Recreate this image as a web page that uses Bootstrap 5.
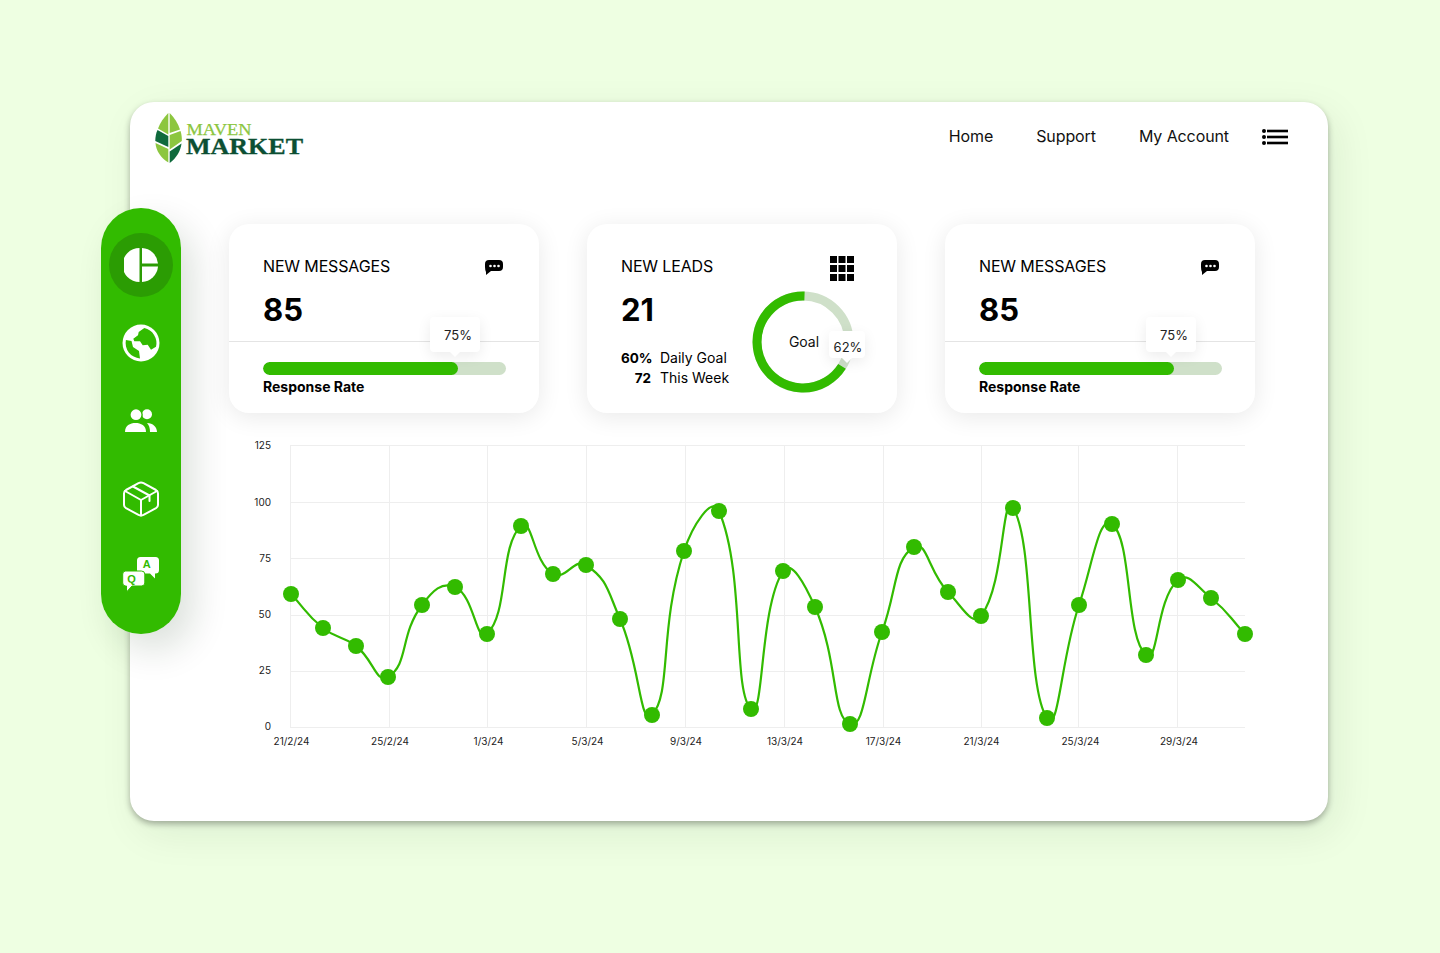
<!DOCTYPE html>
<html lang="en">
<head>
    <meta charset="UTF-8">
    <meta name="viewport" content="width=device-width, initial-scale=1.0">
    <title>Maven Market Dashboard</title>
    <link rel="stylesheet" href="https://cdn.jsdelivr.net/npm/bootstrap@5.3.0/dist/css/bootstrap.min.css">
    <style>
        html, body { height: 100%; }
        body { background: #eeffe2; font-family: Inter, "Liberation Sans", sans-serif; color: #000; padding: 102px 0 0 130px; }
        .dash-panel { width: 1198px; height: 719px; background: #fff; border-radius: 24px; box-shadow: 0 3px 6px rgba(0,0,0,.3), 8px 12px 40px rgba(0,40,0,.08); }
        .dash-head { height: 106px; padding: 10px 40px 0 25px; }
        .logo-svg { width: 150px; height: 53px; display: block; }
        .top-links { gap: 43px; margin-right: 33px; margin-top: 12px; }
        .top-links a { color: #111; font-size: 16px; line-height: 24px; letter-spacing: -.1px; text-decoration: none; }
        .menu-btn { margin-top: 17px; line-height: 0; }
        .side-rail { width: 80px; height: 426px; margin-left: -29px; padding: 25px 8px; gap: 14px; background: #32bb00; border-radius: 40px; box-shadow: 12px 16px 36px rgba(0,40,0,.14); flex: none; }
        .rail-item { width: 64px; height: 64px; border-radius: 50%; }
        .rail-item.is-on { background: #2b9c03; }
        .qa-icon { margin-bottom: 6px; }
        .main-col { width: 1026px; margin-left: 48px; padding-top: 16px; }
        .kpi-row { gap: 48px; }
        .kpi-card { width: 310px; height: 189px; background: #fff; border-radius: 20px; box-shadow: 0 4px 24px rgba(0,0,0,.09); position: relative; }
        .kpi-top { height: 118px; padding: 31px 36px 0 34px; border-bottom: 1px solid #e4e4e4; }
        .kpi-title { font-size: 16px; line-height: 22px; letter-spacing: -.15px; }
        .kpi-value { font-size: 31px; font-weight: 700; line-height: 36px; margin-top: 15px; }
        .kpi-bottom { padding: 20px 33px 0 34px; }
        .rate-bar { height: 13px; border-radius: 7px; background: #cfe0c9; }
        .rate-bar .progress-bar { background: #32bb00; border-radius: 7px; }
        .rate-label { font-size: 14px; font-weight: 700; line-height: 20px; margin-top: 2px; }
        .msg-icon { margin-top: 5px; }
        .grid-icon { margin-top: 1px; }
        .tip-box { position: absolute; background: #fff; border-radius: 4px; font-size: 13px; line-height: 20px; color: #222; text-align: center; box-shadow: 0 4px 14px rgba(0,0,0,.08); }
        .tip-box::after { content: ""; position: absolute; left: 50%; bottom: -5px; margin-left: -6px; border: 6px solid transparent; border-bottom: 0; border-top-color: #fff; }
        .tip-msg { left: 201px; top: 93px; width: 50px; height: 35px; padding: 8px 0 0 6px; }
        .tip-goal { left: 242px; top: 107px; width: 36px; height: 27px; padding: 6px 0 0 2px; }
        .lead-row { margin-top: 10px; }
        .lead-row .kpi-value { margin-top: 1px; }
        .lead-stats { margin-top: 20px; font-size: 14px; line-height: 19px; }
        .lead-stats b { display: inline-block; width: 30px; font-size: 13.5px; text-align: right; margin-right: 9px; }
        .kpi-lead { padding: 31px 43px 0 34px; }
        .donut-svg { width: 102px; height: 102px; display: block; }
        .chart-svg { width: 1026px; height: 320px; display: block; margin-top: 22px; overflow: visible; }
        .chart-svg text { font-family: Inter, "Liberation Sans", sans-serif; font-size: 10px; fill: #222; }
    </style>
</head>
<body>

<div class="dash-panel">
    <!-- top bar -->
    <div class="dash-head d-flex justify-content-between align-items-start">
        <svg class="logo-svg" viewBox="155 112 150 53">
            <path d="M168.300 113C163.500 118 160 123 158 128.500L168.300 134.500Z" fill="#8cc63f"/>
            <path d="M169.700 113C174.500 118 178 123 180 129.500L169.700 133Z" fill="#8cc63f"/>
            <path d="M157.500 130C156 133 155.300 137 155.300 141L168.300 147V136Z" fill="#0f6a3c"/>
            <path d="M180.500 131C181.500 134 182 137 181.800 141L169.700 149.500V135Z" fill="#8cc63f"/>
            <path d="M155.500 143C156 151 161 158 168.300 162.500V149Z" fill="#8cc63f"/>
            <path d="M181.500 143.500C180.500 151 176.500 158 169.700 163V151.500Z" fill="#0f6a3c"/>
            <text x="186.500" y="134.500" font-family="Liberation Serif, serif" font-size="17.500" fill="#8cc63f" stroke="#8cc63f" stroke-width=".25" textLength="65" lengthAdjust="spacingAndGlyphs">MAVEN</text>
            <text x="186" y="153.500" font-family="Liberation Serif, serif" font-weight="700" font-size="22.500" fill="#0c4f33" stroke="#0c4f33" stroke-width=".3" textLength="117" lengthAdjust="spacingAndGlyphs">MARKET</text>
        </svg>
        <div class="d-flex">
            <nav class="top-links d-flex">
                <a href="#">Home</a>
                <a href="#">Support</a>
                <a href="#">My Account</a>
            </nav>
            <div class="menu-btn">
                <svg width="26" height="16" viewBox="0 0 26 16"><g fill="#000"><circle cx="2" cy="2" r="2"/><circle cx="2" cy="8" r="2"/><circle cx="2" cy="14" r="2"/><rect x="5" y=".7" width="21" height="2.600"/><rect x="5" y="6.700" width="21" height="2.600"/><rect x="5" y="12.700" width="21" height="2.600"/></g></svg>
            </div>
        </div>
    </div>

    <div class="d-flex align-items-start">
        <!-- side rail -->
        <div class="side-rail d-flex flex-column">
            <div class="rail-item is-on d-flex align-items-center justify-content-center">
                <svg width="34" height="34" viewBox="0 0 34 34" fill="#fff"><path d="M15.500 0A17 17 0 0 0 15.500 34Z"/><path d="M18 0A17 17 0 0 1 34 15.500H18Z"/><path d="M18 18.500H34A17 17 0 0 1 18 34Z"/></svg>
            </div>
            <div class="rail-item d-flex align-items-center justify-content-center">
                <svg width="38" height="38" viewBox="0 0 38 38"><circle cx="19" cy="19" r="18.500" fill="#fff"/><path d="M22.300 4.100L16.700 8L16 11.300L11.300 14.700L12.300 17.300L18 17.300L20.700 21.300L25.700 20.700L29 25.700L34 22.700A15.400 15.400 0 0 0 22.300 4.100Z" fill="#32bb00"/><path d="M3.900 16L9.500 17L11 23L17 27L18 34.400A15.400 15.400 0 0 1 3.900 16Z" fill="#32bb00"/></svg>
            </div>
            <div class="rail-item d-flex align-items-center justify-content-center">
                <svg width="32" height="24" viewBox="0 0 32 24" fill="#fff"><circle cx="22" cy="5.200" r="5"/><circle cx="11" cy="5.700" r="6.800" fill="#32bb00"/><circle cx="11" cy="5.700" r="5.400"/><path d="M0 23C0 16.500 5 14 10.500 14S21 16.500 21 23Z"/><path d="M22 14C28 14 32 18 32 23H25C25 19 24 16 22 14Z"/></svg>
            </div>
            <div class="rail-item d-flex align-items-center justify-content-center">
                <svg width="36" height="36" viewBox="-1 -1 36 36" fill="none" stroke="#fff" stroke-width="2" stroke-linejoin="round" stroke-linecap="round"><path d="M14.500 1.200Q17 0 19.500 1.200L32 8Q34 9.200 34 11.500V23Q34 25 32 26.200L19.500 32.800Q17 34 14.500 32.800L2 26.200Q0 25 0 23V11.500Q0 9.200 2 8Z"/><path d="M1 9L17 18L33 9M17 18V33.500"/><path d="M9 4.500L25.500 13.500V19"/></svg>
            </div>
            <div class="rail-item d-flex align-items-center justify-content-center">
                <svg class="qa-icon" width="38" height="36" viewBox="0 0 38 36"><path d="M18.500 1H33.500Q37 1 37 4.500V14Q37 17.500 33.500 17.500H33V22.500L28 17.500H18.500Q15 17.500 15 14V4.500Q15 1 18.500 1Z" fill="#fff"/><path d="M3.700 15H19.300Q22.800 15 22.800 18V27Q22.800 30 19.300 30H10L4.500 36V30H3.700Q.7 30 .7 27V18Q.7 15 3.700 15Z" fill="#fff" stroke="#32bb00"/><text x="24.700" y="12.300" text-anchor="middle" font-family="Liberation Sans, sans-serif" font-weight="700" font-size="11" fill="#32bb00">A</text><text x="9.500" y="26.500" text-anchor="middle" font-family="Liberation Sans, sans-serif" font-weight="700" font-size="11" fill="#32bb00">Q</text></svg>
            </div>
        </div>

        <div class="main-col">
            <div class="kpi-row d-flex">
                <div class="kpi-card">
                    <div class="kpi-top">
                        <div class="d-flex justify-content-between align-items-start">
                            <span class="kpi-title">NEW MESSAGES</span>
                            <svg width="18" height="15" viewBox="0 0 18 15" class="msg-icon"><path d="M4 0H14Q18 0 18 4V7Q18 11 14 11H6L1 15V12Q0 10 0 7V4Q0 0 4 0Z" fill="#000"/><circle cx="5.500" cy="6" r="1.300" fill="#fff"/><circle cx="9.500" cy="6" r="1.300" fill="#fff"/><circle cx="13.500" cy="6" r="1.300" fill="#fff"/></svg>
                        </div>
                        <div class="kpi-value">85</div>
                    </div>
                    <div class="kpi-bottom">
                        <div class="progress rate-bar"><div class="progress-bar" style="width: 80.3%"></div></div>
                        <div class="rate-label">Response Rate</div>
                    </div>
                    <div class="tip-box tip-msg">75%</div>
                </div>

                <div class="kpi-card kpi-lead">
                    <div class="d-flex justify-content-between align-items-start">
                        <span class="kpi-title">NEW LEADS</span>
                        <svg width="24" height="25" viewBox="0 0 24 25" class="grid-icon" fill="#000"><rect width="7" height="7"/><rect x="8.500" width="7" height="7"/><rect x="17" width="7" height="7"/><rect y="9" width="7" height="7"/><rect x="8.500" y="9" width="7" height="7"/><rect x="17" y="9" width="7" height="7"/><rect y="18" width="7" height="7"/><rect x="8.500" y="18" width="7" height="7"/><rect x="17" y="18" width="7" height="7"/></svg>
                    </div>
                    <div class="lead-row d-flex justify-content-between">
                        <div>
                            <div class="kpi-value">21</div>
                            <div class="lead-stats">
                                <div><b>60%</b>Daily Goal</div>
                                <div><b>72</b>This Week</div>
                            </div>
                        </div>
                        <svg class="donut-svg" viewBox="0 0 102 102" fill="none" stroke-width="9">
                            <circle cx="51" cy="51" r="46" stroke="#cfe0c9"/>
                            <path d="M52.500 5A46 46 0 1 0 90 75.400" stroke="#32bb00"/>
                            <text x="52" y="56" text-anchor="middle" font-size="14" fill="#111" stroke="none" font-family="Inter, sans-serif">Goal</text>
                        </svg>
                    </div>
                    <div class="tip-box tip-goal">62%</div>
                </div>

                <div class="kpi-card">
                    <div class="kpi-top">
                        <div class="d-flex justify-content-between align-items-start">
                            <span class="kpi-title">NEW MESSAGES</span>
                            <svg width="18" height="15" viewBox="0 0 18 15" class="msg-icon"><path d="M4 0H14Q18 0 18 4V7Q18 11 14 11H6L1 15V12Q0 10 0 7V4Q0 0 4 0Z" fill="#000"/><circle cx="5.500" cy="6" r="1.300" fill="#fff"/><circle cx="9.500" cy="6" r="1.300" fill="#fff"/><circle cx="13.500" cy="6" r="1.300" fill="#fff"/></svg>
                        </div>
                        <div class="kpi-value">85</div>
                    </div>
                    <div class="kpi-bottom">
                        <div class="progress rate-bar"><div class="progress-bar" style="width: 80.3%"></div></div>
                        <div class="rate-label">Response Rate</div>
                    </div>
                    <div class="tip-box tip-msg">75%</div>
                </div>
            </div>

            <svg class="chart-svg" id="chart" viewBox="229 435 1026 320"></svg>
        </div>
    </div>
</div>

<script>
    // x,y of every point as read off the picture, the axis is drawn in the same coordinates
    const points = [[291,594],[323,628],[356,646],[388,677],[422,605],[455,587],[487,634],[521,526],[553,574],[586,565],[620,619],[652,715],[684,551],[719,511],[751,709],[783,571],[815,607],[850,724],[882,632],[914,547],[948,592],[981,616],[1013,508],[1047,718],[1079,605],[1112,524],[1146,655],[1178,580],[1211,598],[1245,634]];
    // [grid line, label position, label]
    const yTicks = [[445,449,"125"],[502,506,"100"],[558,562,"75"],[615,618,"50"],[671,674,"25"],[727,730,"0"]];
    const xTicks = [[290,291.5,"21/2/24"],[389,390,"25/2/24"],[487,488.5,"1/3/24"],[586,587.5,"5/3/24"],[685,686,"9/3/24"],[784,785,"13/3/24"],[883,883.5,"17/3/24"],[981,981.5,"21/3/24"],[1078,1080.5,"25/3/24"],[1177,1179,"29/3/24"]];

    let svg = "";
    yTicks.forEach(t => {
        svg += `<line x1="290" x2="1245" y1="${t[0]+.5}" y2="${t[0]+.5}" stroke="#eeeeee"/>`;
        svg += `<text x="271" y="${t[1]}" text-anchor="end">${t[2]}</text>`;
    });
    xTicks.forEach(t => {
        svg += `<line x1="${t[0]+.5}" x2="${t[0]+.5}" y1="445" y2="728" stroke="#eeeeee"/>`;
        svg += `<text x="${t[1]}" y="744.500" text-anchor="middle">${t[2]}</text>`;
    });

    // same control points chart.js uses for a line with tension
    const tension = 0.5;
    function controls(p0, p1, p2) {
        const d01 = Math.hypot(p1[0] - p0[0], p1[1] - p0[1]);
        const d12 = Math.hypot(p2[0] - p1[0], p2[1] - p1[1]);
        const sum = d01 + d12 || 1;
        const fa = tension * d01 / sum, fb = tension * d12 / sum;
        return {
            prev: [p1[0] - fa * (p2[0] - p0[0]), p1[1] - fa * (p2[1] - p0[1])],
            next: [p1[0] + fb * (p2[0] - p0[0]), p1[1] + fb * (p2[1] - p0[1])]
        };
    }
    let d = `M${points[0][0]} ${points[0][1]}`;
    for (let i = 0; i < points.length - 1; i++) {
        const a = controls(points[Math.max(i - 1, 0)], points[i], points[i + 1]);
        const b = controls(points[i], points[i + 1], points[Math.min(i + 2, points.length - 1)]);
        d += `C${a.next[0]} ${a.next[1]} ${b.prev[0]} ${b.prev[1]} ${points[i + 1][0]} ${points[i + 1][1]}`;
    }
    svg += `<path d="${d}" fill="none" stroke="#32bb00" stroke-width="2.2"/>`;
    points.forEach(p => { svg += `<circle cx="${p[0]}" cy="${p[1]}" r="8" fill="#32bb00"/>`; });
    document.getElementById("chart").innerHTML = svg;
</script>
<script src="https://cdn.jsdelivr.net/npm/bootstrap@5.3.0/dist/js/bootstrap.bundle.min.js"></script>
</body>
</html>
